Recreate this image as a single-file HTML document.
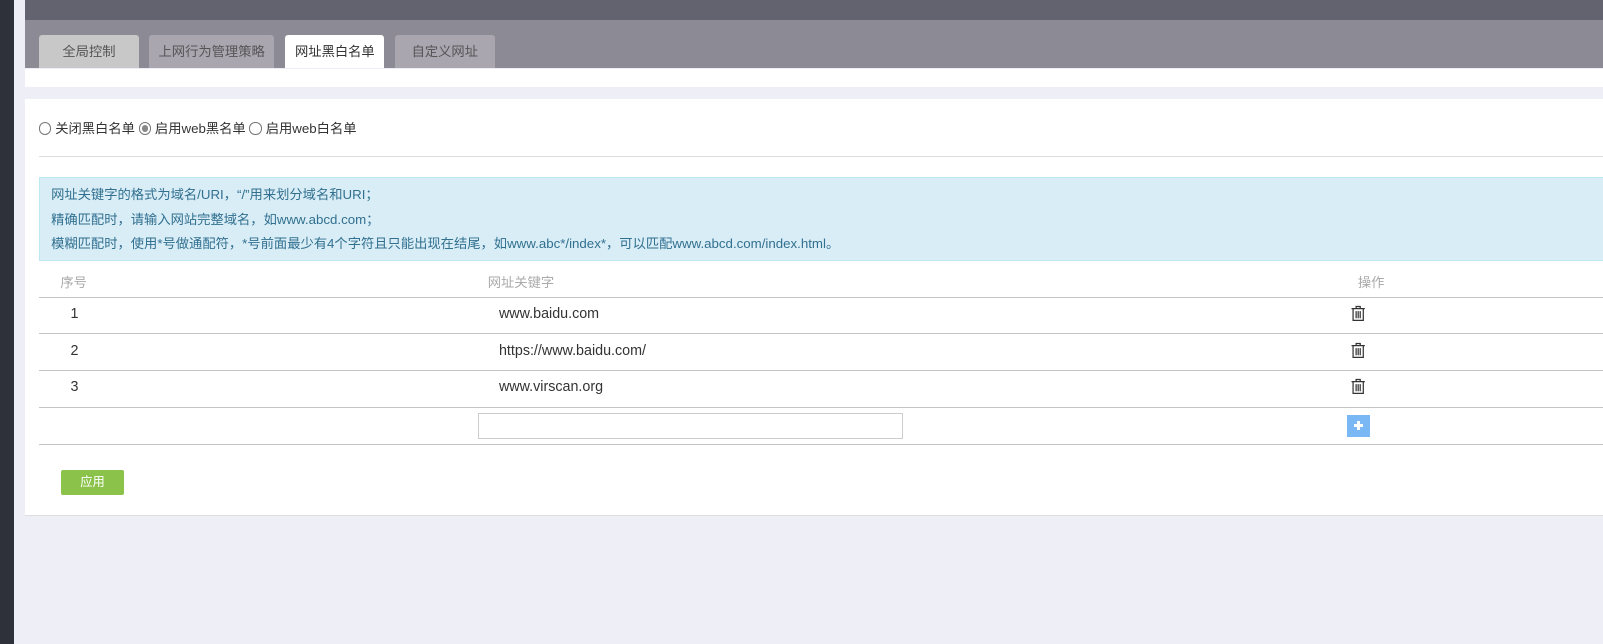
<!DOCTYPE html>
<html><head><meta charset="utf-8"><style>
*{margin:0;padding:0;box-sizing:border-box}
html{width:1603px;height:644px;overflow:hidden;background:#eeeff6}
body{width:1568px;height:630px;overflow:hidden;background:#eeeff6;font-family:"Liberation Sans","Noto Sans CJK SC",sans-serif;font-size:13px;color:#333;position:relative;zoom:1.0225}
.abs{position:absolute}
.tab{position:absolute;top:34px;height:33px;border-radius:3px 3px 0 0;text-align:center;line-height:33px;font-size:13px;color:#555}
.line{position:absolute;left:38px;right:0;height:1px;background:#c4c4c4}
.radio{display:inline-block;width:12px;height:12px;border:1px solid #777;border-radius:50%;vertical-align:-2px;margin-right:4px;position:relative}
.radio.on::after{content:"";position:absolute;left:2px;top:2px;width:6px;height:6px;border-radius:50%;background:#888}
.cell{position:absolute;font-size:14px;color:#333}
</style></head><body>
<div class="abs" style="left:0;top:0;width:14px;height:644px;background:#2f313a"></div>
<div class="abs" style="left:24px;top:0;right:0;height:20px;background:#62636f"></div>
<div class="abs" style="left:24px;top:20px;right:0;height:47px;background:#8c8a94"></div>
<div class="tab" style="left:38px;width:98px;background:#c8c8c8">全局控制</div>
<div class="tab" style="left:146px;width:122px;background:#aaa6b0">上网行为管理策略</div>
<div class="tab" style="left:279px;width:97px;background:#fff;color:#333">网址黑白名单</div>
<div class="tab" style="left:386px;width:98px;background:#aaa6b0">自定义网址</div>
<div class="abs" style="left:24px;top:67px;right:0;height:18px;background:#fff"></div>
<div class="abs" style="left:24px;top:97px;right:0;height:408px;background:#fff;border-bottom:1px solid #ddd"></div>
<div class="abs" style="left:38px;top:115px;font-size:13px;color:#333"><span class="radio"></span>关闭黑白名单 <span class="radio on"></span>启用web黑名单 <span class="radio"></span>启用web白名单</div>
<div class="line" style="top:153px;background:#ddd"></div>
<div class="abs" style="left:38px;top:173px;right:0;height:82px;background:#d9edf7;border:1px solid #bce8f1;border-right:none;color:#31708f;font-size:13px;line-height:24px;padding:5px 0 0 11px">网址关键字的格式为域名/URI，“/”用来划分域名和URI；<br>精确匹配时，请输入网站完整域名，如www.abcd.com；<br>模糊匹配时，使用*号做通配符，*号前面最少有4个字符且只能出现在结尾，如www.abc*/index*，可以匹配www.abcd.com/index.html。</div>
<div class="cell" style="left:59px;top:266px;color:#aaa;font-size:13px">序号</div>
<div class="cell" style="left:477px;top:266px;color:#aaa;font-size:13px">网址关键字</div>
<div class="cell" style="left:1328px;top:266px;color:#aaa;font-size:13px">操作</div>
<div class="line" style="top:290px"></div>
<div class="line" style="top:326px"></div>
<div class="line" style="top:362px"></div>
<div class="line" style="top:398px"></div>
<div class="line" style="top:434px"></div>
<div class="cell" style="left:69px;top:299px">1</div>
<div class="cell" style="left:488px;top:299px">www.baidu.com</div>
<div class="cell" style="left:69px;top:335px">2</div>
<div class="cell" style="left:488px;top:335px">https://www.baidu.com/</div>
<div class="cell" style="left:69px;top:371px">3</div>
<div class="cell" style="left:488px;top:371px">www.virscan.org</div>
<svg class="abs" style="left:1320px;top:298px" width="16" height="18" viewBox="0 0 16 18"><g fill="none" stroke="#333" stroke-width="1.2"><path d="M1.5 3.5h13M6 3.5V1.5h4v2M3 3.5v11.5h10V3.5M6 6v7M8 6v7M10 6v7"/></g></svg>
<svg class="abs" style="left:1320px;top:334px" width="16" height="18" viewBox="0 0 16 18"><g fill="none" stroke="#333" stroke-width="1.2"><path d="M1.5 3.5h13M6 3.5V1.5h4v2M3 3.5v11.5h10V3.5M6 6v7M8 6v7M10 6v7"/></g></svg>
<svg class="abs" style="left:1320px;top:370px" width="16" height="18" viewBox="0 0 16 18"><g fill="none" stroke="#333" stroke-width="1.2"><path d="M1.5 3.5h13M6 3.5V1.5h4v2M3 3.5v11.5h10V3.5M6 6v7M8 6v7M10 6v7"/></g></svg>
<div class="abs" style="left:467px;top:404px;width:416px;height:25px;border:1px solid #ccc;background:#fff"></div>
<div class="abs" style="left:1317px;top:406px;width:23px;height:21px;background:#7ab8f5"></div>
<div class="abs" style="left:1324px;top:415px;width:9px;height:3px;background:#fff"></div>
<div class="abs" style="left:1327px;top:412px;width:3px;height:9px;background:#fff"></div>
<div class="abs" style="left:60px;top:460px;width:61px;height:24px;background:#8bc34a;border-radius:2px;color:#fff;text-align:center;line-height:24px;font-size:12px">应用</div>
</body></html>
